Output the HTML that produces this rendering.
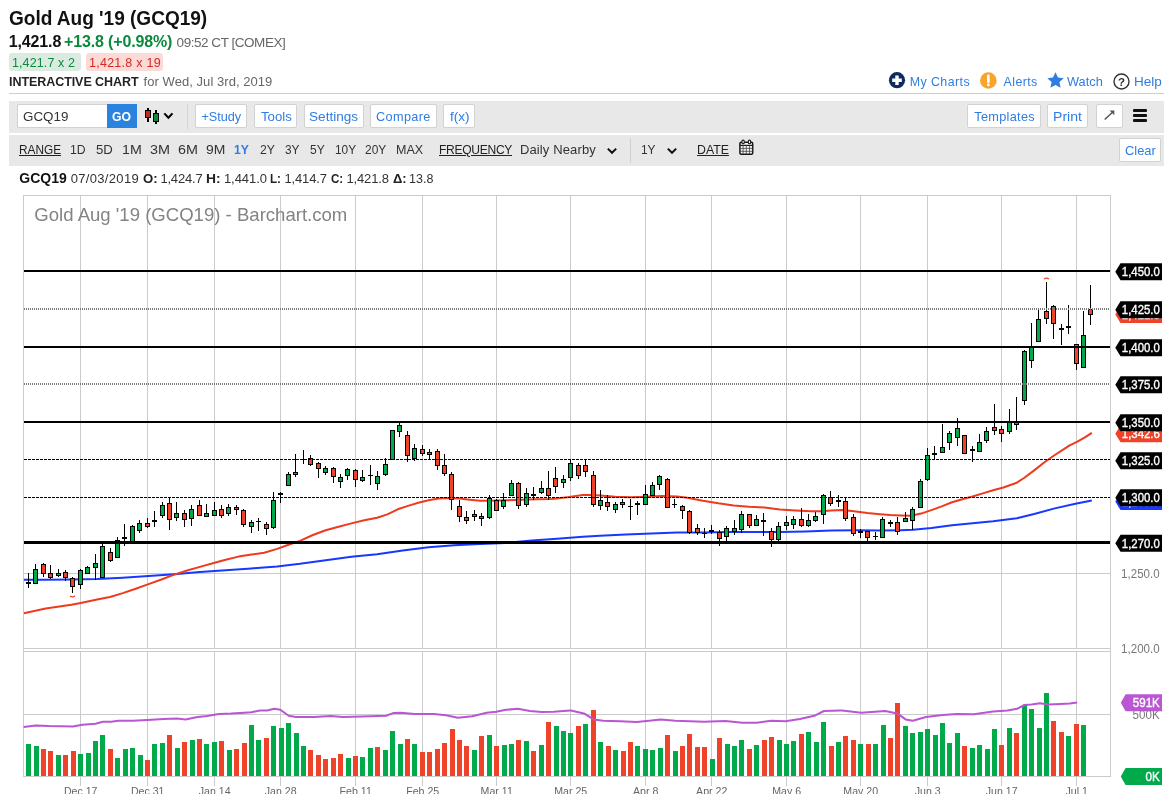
<!DOCTYPE html>
<html lang="en"><head><meta charset="utf-8"><title>Gold Aug '19 (GCQ19) Interactive Chart</title>
<style>
html,body{margin:0;padding:0;background:#fff}
body{width:1167px;height:794px;position:relative;overflow:hidden;font-family:"Liberation Sans",Arial,sans-serif}
.t{position:absolute;white-space:nowrap;line-height:1;z-index:3;transform-origin:0 0}
.bx{position:absolute;box-sizing:border-box}
.bar{background:#e8e8e8}
.btn{background:#fff;border:1px solid #d2d2d2;border-radius:2px}
.pill{border-radius:3px}
svg.ic{position:absolute;overflow:visible}
</style></head>
<body>
<div id="page" style="position:absolute;left:0;top:0;width:1167px;height:794px;will-change:transform">
<svg class="chart" width="1167" height="794" viewBox="0 0 1167 794" style="position:absolute;left:0;top:0" font-family="Liberation Sans, Arial, sans-serif">
<g shape-rendering="crispEdges" fill="none" stroke="#cbcbcb" stroke-width="1">
<rect x="23.5" y="195.5" width="1087.0" height="453.0" fill="#fff"/>
<rect x="23.5" y="651.5" width="1087.0" height="125.0" fill="#fff"/>
<path d="M80.5 195.5V648.5M80.5 651.5V785.5"/>
<path d="M147.5 195.5V648.5M147.5 651.5V785.5"/>
<path d="M214.5 195.5V648.5M214.5 651.5V785.5"/>
<path d="M280.5 195.5V648.5M280.5 651.5V785.5"/>
<path d="M355.5 195.5V648.5M355.5 651.5V785.5"/>
<path d="M422.5 195.5V648.5M422.5 651.5V785.5"/>
<path d="M496.5 195.5V648.5M496.5 651.5V785.5"/>
<path d="M570.5 195.5V648.5M570.5 651.5V785.5"/>
<path d="M645.5 195.5V648.5M645.5 651.5V785.5"/>
<path d="M711.5 195.5V648.5M711.5 651.5V785.5"/>
<path d="M786.5 195.5V648.5M786.5 651.5V785.5"/>
<path d="M860.5 195.5V648.5M860.5 651.5V785.5"/>
<path d="M927.5 195.5V648.5M927.5 651.5V785.5"/>
<path d="M1001.5 195.5V648.5M1001.5 651.5V785.5"/>
<path d="M1076.5 195.5V648.5M1076.5 651.5V785.5"/>
<path d="M23.5 573.5H1110.5"/>
<path d="M23.5 714.5H1110.5M23.5 648.5V651.5M1110.5 648.5V651.5"/>
</g>
<text id="wm" x="34.3" y="221.3" font-size="18.5" fill="#838383" textLength="313" lengthAdjust="spacingAndGlyphs">Gold Aug '19 (GCQ19) - Barchart.com</text>
<g shape-rendering="crispEdges">
<rect x="26" y="744" width="5" height="32" fill="#00aa4b"/>
<rect x="34" y="746" width="5" height="30" fill="#00aa4b"/>
<rect x="41" y="749" width="5" height="27" fill="#ee4328"/>
<rect x="48" y="751" width="5" height="25" fill="#ee4328"/>
<rect x="56" y="755" width="5" height="21" fill="#00aa4b"/>
<rect x="63" y="755" width="5" height="21" fill="#ee4328"/>
<rect x="71" y="751" width="5" height="25" fill="#ee4328"/>
<rect x="78" y="754" width="5" height="22" fill="#00aa4b"/>
<rect x="86" y="753" width="5" height="23" fill="#00aa4b"/>
<rect x="93" y="741" width="5" height="35" fill="#00aa4b"/>
<rect x="100" y="735" width="5" height="41" fill="#00aa4b"/>
<rect x="108" y="749" width="5" height="27" fill="#ee4328"/>
<rect x="115" y="758" width="5" height="18" fill="#00aa4b"/>
<rect x="123" y="749" width="5" height="27" fill="#00aa4b"/>
<rect x="130" y="748" width="5" height="28" fill="#00aa4b"/>
<rect x="138" y="755" width="5" height="21" fill="#00aa4b"/>
<rect x="145" y="760" width="5" height="16" fill="#ee4328"/>
<rect x="152" y="744" width="5" height="32" fill="#00aa4b"/>
<rect x="160" y="743" width="5" height="33" fill="#00aa4b"/>
<rect x="167" y="735" width="5" height="41" fill="#ee4328"/>
<rect x="175" y="748" width="5" height="28" fill="#00aa4b"/>
<rect x="182" y="742" width="5" height="34" fill="#ee4328"/>
<rect x="190" y="740" width="5" height="36" fill="#00aa4b"/>
<rect x="197" y="739" width="5" height="37" fill="#ee4328"/>
<rect x="204" y="744" width="5" height="32" fill="#00aa4b"/>
<rect x="212" y="742" width="5" height="34" fill="#00aa4b"/>
<rect x="219" y="741" width="5" height="35" fill="#ee4328"/>
<rect x="227" y="750" width="5" height="26" fill="#00aa4b"/>
<rect x="234" y="749" width="5" height="27" fill="#ee4328"/>
<rect x="242" y="743" width="5" height="33" fill="#ee4328"/>
<rect x="249" y="725" width="5" height="51" fill="#00aa4b"/>
<rect x="256" y="740" width="5" height="36" fill="#00aa4b"/>
<rect x="264" y="738" width="5" height="38" fill="#ee4328"/>
<rect x="271" y="726" width="5" height="50" fill="#00aa4b"/>
<rect x="279" y="728" width="5" height="48" fill="#00aa4b"/>
<rect x="286" y="723" width="5" height="53" fill="#00aa4b"/>
<rect x="294" y="733" width="5" height="43" fill="#00aa4b"/>
<rect x="301" y="746" width="5" height="30" fill="#00aa4b"/>
<rect x="308" y="750" width="5" height="26" fill="#ee4328"/>
<rect x="316" y="755" width="5" height="21" fill="#ee4328"/>
<rect x="323" y="759" width="5" height="17" fill="#ee4328"/>
<rect x="331" y="758" width="5" height="18" fill="#ee4328"/>
<rect x="338" y="754" width="5" height="22" fill="#ee4328"/>
<rect x="346" y="758" width="5" height="18" fill="#00aa4b"/>
<rect x="353" y="756" width="5" height="20" fill="#ee4328"/>
<rect x="360" y="757" width="5" height="19" fill="#00aa4b"/>
<rect x="368" y="748" width="5" height="28" fill="#00aa4b"/>
<rect x="375" y="747" width="5" height="29" fill="#ee4328"/>
<rect x="383" y="750" width="5" height="26" fill="#00aa4b"/>
<rect x="390" y="731" width="5" height="45" fill="#00aa4b"/>
<rect x="398" y="744" width="5" height="32" fill="#00aa4b"/>
<rect x="405" y="739" width="5" height="37" fill="#ee4328"/>
<rect x="412" y="744" width="5" height="32" fill="#00aa4b"/>
<rect x="420" y="752" width="5" height="24" fill="#ee4328"/>
<rect x="427" y="752" width="5" height="24" fill="#ee4328"/>
<rect x="435" y="749" width="5" height="27" fill="#ee4328"/>
<rect x="442" y="743" width="5" height="33" fill="#ee4328"/>
<rect x="450" y="729" width="5" height="47" fill="#ee4328"/>
<rect x="457" y="740" width="5" height="36" fill="#ee4328"/>
<rect x="464" y="746" width="5" height="30" fill="#ee4328"/>
<rect x="472" y="750" width="5" height="26" fill="#00aa4b"/>
<rect x="479" y="736" width="5" height="40" fill="#ee4328"/>
<rect x="487" y="735" width="5" height="41" fill="#00aa4b"/>
<rect x="494" y="746" width="5" height="30" fill="#ee4328"/>
<rect x="502" y="745" width="5" height="31" fill="#00aa4b"/>
<rect x="509" y="744" width="5" height="32" fill="#00aa4b"/>
<rect x="516" y="740" width="5" height="36" fill="#ee4328"/>
<rect x="524" y="741" width="5" height="35" fill="#00aa4b"/>
<rect x="531" y="751" width="5" height="25" fill="#ee4328"/>
<rect x="539" y="745" width="5" height="31" fill="#00aa4b"/>
<rect x="546" y="722" width="5" height="54" fill="#ee4328"/>
<rect x="554" y="726" width="5" height="50" fill="#00aa4b"/>
<rect x="561" y="731" width="5" height="45" fill="#00aa4b"/>
<rect x="568" y="733" width="5" height="43" fill="#00aa4b"/>
<rect x="576" y="726" width="5" height="50" fill="#ee4328"/>
<rect x="583" y="724" width="5" height="52" fill="#00aa4b"/>
<rect x="591" y="710" width="5" height="66" fill="#ee4328"/>
<rect x="598" y="742" width="5" height="34" fill="#00aa4b"/>
<rect x="606" y="746" width="5" height="30" fill="#ee4328"/>
<rect x="613" y="750" width="5" height="26" fill="#00aa4b"/>
<rect x="621" y="751" width="5" height="25" fill="#ee4328"/>
<rect x="628" y="742" width="5" height="34" fill="#ee4328"/>
<rect x="635" y="746" width="5" height="30" fill="#00aa4b"/>
<rect x="643" y="749" width="5" height="27" fill="#00aa4b"/>
<rect x="650" y="750" width="5" height="26" fill="#00aa4b"/>
<rect x="658" y="748" width="5" height="28" fill="#00aa4b"/>
<rect x="665" y="735" width="5" height="41" fill="#ee4328"/>
<rect x="673" y="751" width="5" height="25" fill="#00aa4b"/>
<rect x="680" y="746" width="5" height="30" fill="#ee4328"/>
<rect x="687" y="734" width="5" height="42" fill="#ee4328"/>
<rect x="695" y="747" width="5" height="29" fill="#ee4328"/>
<rect x="702" y="747" width="5" height="29" fill="#ee4328"/>
<rect x="710" y="759" width="5" height="17" fill="#00aa4b"/>
<rect x="717" y="738" width="5" height="38" fill="#ee4328"/>
<rect x="725" y="744" width="5" height="32" fill="#00aa4b"/>
<rect x="732" y="746" width="5" height="30" fill="#00aa4b"/>
<rect x="739" y="740" width="5" height="36" fill="#00aa4b"/>
<rect x="747" y="749" width="5" height="27" fill="#ee4328"/>
<rect x="754" y="745" width="5" height="31" fill="#00aa4b"/>
<rect x="762" y="740" width="5" height="36" fill="#ee4328"/>
<rect x="769" y="737" width="5" height="39" fill="#ee4328"/>
<rect x="777" y="740" width="5" height="36" fill="#00aa4b"/>
<rect x="784" y="744" width="5" height="32" fill="#00aa4b"/>
<rect x="791" y="741" width="5" height="35" fill="#00aa4b"/>
<rect x="799" y="734" width="5" height="42" fill="#ee4328"/>
<rect x="806" y="732" width="5" height="44" fill="#00aa4b"/>
<rect x="814" y="742" width="5" height="34" fill="#00aa4b"/>
<rect x="821" y="722" width="5" height="54" fill="#00aa4b"/>
<rect x="829" y="746" width="5" height="30" fill="#ee4328"/>
<rect x="836" y="742" width="5" height="34" fill="#00aa4b"/>
<rect x="843" y="736" width="5" height="40" fill="#ee4328"/>
<rect x="851" y="740" width="5" height="36" fill="#ee4328"/>
<rect x="858" y="744" width="5" height="32" fill="#00aa4b"/>
<rect x="866" y="744" width="5" height="32" fill="#ee4328"/>
<rect x="873" y="744" width="5" height="32" fill="#00aa4b"/>
<rect x="881" y="725" width="5" height="51" fill="#00aa4b"/>
<rect x="888" y="738" width="5" height="38" fill="#ee4328"/>
<rect x="895" y="703" width="5" height="73" fill="#ee4328"/>
<rect x="903" y="726" width="5" height="50" fill="#00aa4b"/>
<rect x="910" y="733" width="5" height="43" fill="#00aa4b"/>
<rect x="918" y="732" width="5" height="44" fill="#00aa4b"/>
<rect x="925" y="729" width="5" height="47" fill="#00aa4b"/>
<rect x="933" y="735" width="5" height="41" fill="#00aa4b"/>
<rect x="940" y="723" width="5" height="53" fill="#00aa4b"/>
<rect x="947" y="743" width="5" height="33" fill="#00aa4b"/>
<rect x="955" y="733" width="5" height="43" fill="#00aa4b"/>
<rect x="962" y="746" width="5" height="30" fill="#ee4328"/>
<rect x="970" y="748" width="5" height="28" fill="#00aa4b"/>
<rect x="977" y="745" width="5" height="31" fill="#00aa4b"/>
<rect x="985" y="749" width="5" height="27" fill="#00aa4b"/>
<rect x="992" y="729" width="5" height="47" fill="#00aa4b"/>
<rect x="999" y="745" width="5" height="31" fill="#ee4328"/>
<rect x="1007" y="728" width="5" height="48" fill="#00aa4b"/>
<rect x="1014" y="733" width="5" height="43" fill="#ee4328"/>
<rect x="1022" y="705" width="5" height="71" fill="#00aa4b"/>
<rect x="1029" y="709" width="5" height="67" fill="#00aa4b"/>
<rect x="1037" y="728" width="5" height="48" fill="#00aa4b"/>
<rect x="1044" y="693" width="5" height="83" fill="#00aa4b"/>
<rect x="1051" y="721" width="5" height="55" fill="#ee4328"/>
<rect x="1059" y="732" width="5" height="44" fill="#ee4328"/>
<rect x="1066" y="736" width="5" height="40" fill="#00aa4b"/>
<rect x="1074" y="724" width="5" height="52" fill="#ee4328"/>
<rect x="1081" y="725" width="5" height="51" fill="#00aa4b"/>
</g>
<path d="M23.6 727.1 L35.6 725.4 L48.8 726.1 L72.8 726.6 L82.4 724.7 L95.6 723.7 L102.8 721.8 L111.2 721.8 L118.4 720.8 L132.8 720.8 L147.4 719.9 L164.0 719.1 L177.1 718.4 L185.5 719.4 L197.5 717.0 L207.1 716.0 L219.1 714.1 L231.1 713.6 L244.3 712.7 L251.5 712.2 L259.9 710.5 L267.1 710.5 L274.3 708.8 L280.3 709.8 L288.7 715.8 L295.9 717.0 L297.2 717.0 L314.0 717.0 L330.8 716.0 L342.8 717.0 L362.0 716.5 L386.0 715.8 L393.2 713.1 L400.4 712.7 L414.8 713.9 L434.0 713.9 L446.0 715.3 L457.9 717.7 L472.3 716.3 L486.7 712.7 L496.3 711.7 L505.9 709.8 L517.9 708.8 L529.9 711.0 L541.9 711.9 L553.9 711.7 L570.0 710.5 L570.8 710.5 L584.0 713.4 L593.6 719.4 L603.2 720.8 L620.0 721.3 L636.8 722.0 L651.2 720.6 L660.8 719.4 L675.2 720.8 L689.6 721.3 L704.0 721.8 L725.5 721.1 L742.3 722.7 L756.7 722.7 L771.1 720.8 L785.5 721.3 L799.9 718.9 L814.3 715.8 L823.9 711.0 L840.0 710.5 L842.0 710.5 L861.2 712.7 L885.2 711.0 L897.2 713.4 L905.6 719.4 L912.8 720.8 L926.0 717.0 L942.8 715.1 L957.2 713.9 L974.0 714.3 L993.1 711.5 L1007.5 710.5 L1017.1 708.8 L1024.3 705.0 L1031.5 704.5 L1039.9 703.3 L1048.3 704.5 L1060.3 704.0 L1069.9 703.5 L1077.1 702.6" fill="none" stroke="#ba55d3" stroke-width="2" stroke-linejoin="round"/>
<path d="M23.9 579.7 L45.7 579.7 L71.4 579.5 L97.1 579.0 L122.8 577.7 L148.5 576.1 L174.2 574.3 L199.9 572.0 L225.7 570.2 L251.4 568.4 L277.1 566.4 L300.0 563.8 L325.7 560.2 L351.4 556.8 L377.1 554.2 L402.8 550.4 L428.5 547.3 L454.2 545.2 L479.9 544.0 L505.7 542.9 L531.4 540.6 L557.1 538.8 L582.8 536.8 L600.0 535.7 L625.7 534.4 L651.4 533.4 L677.1 532.6 L702.8 532.4 L728.5 532.1 L754.2 532.1 L779.9 531.9 L805.7 531.4 L831.4 530.6 L857.1 530.3 L880.0 530.5 L900.6 530.2 L912.9 529.8 L931.4 528.0 L952.0 525.3 L972.5 523.2 L993.1 521.2 L1016.8 518.3 L1034.2 514.0 L1054.8 508.4 L1075.4 503.7 L1091.8 500.4" fill="none" stroke="#1838ff" stroke-width="2" stroke-linejoin="round"/>
<path d="M23.9 613.2 L45.7 608.5 L71.4 604.7 L80.7 602.9 L97.1 599.5 L110.0 597.0 L122.8 593.1 L135.7 588.7 L148.5 584.1 L161.4 579.5 L174.2 574.6 L187.1 570.5 L199.9 566.9 L214.6 562.8 L225.7 559.7 L238.5 556.6 L251.4 554.6 L264.2 552.8 L277.1 548.9 L289.9 544.3 L300.0 540.9 L312.9 535.0 L325.7 530.3 L338.6 526.7 L351.4 523.4 L364.3 520.3 L377.1 517.7 L387.4 514.4 L397.7 509.3 L408.0 505.9 L418.3 502.8 L428.5 500.3 L438.8 498.5 L449.1 497.9 L459.4 498.5 L469.7 499.7 L479.9 500.8 L490.2 500.8 L505.7 500.3 L521.1 499.7 L536.5 499.2 L551.9 499.0 L567.4 497.2 L582.8 495.1 L593.1 495.1 L600.0 495.6 L615.4 496.7 L630.8 497.2 L646.3 496.7 L661.7 495.9 L677.1 496.4 L687.4 497.7 L702.8 500.8 L718.3 503.3 L733.7 505.4 L749.1 506.7 L764.5 507.5 L779.9 509.5 L795.4 510.5 L810.8 511.3 L821.1 511.3 L831.4 510.5 L841.6 510.0 L851.9 511.1 L867.4 513.1 L880.0 514.2 L890.3 515.0 L900.6 515.4 L910.8 515.8 L921.1 513.6 L931.4 510.1 L941.7 506.4 L952.0 502.3 L962.3 499.2 L972.5 496.5 L982.8 493.4 L993.1 490.3 L1003.4 487.5 L1016.8 482.7 L1024.0 478.0 L1034.2 470.4 L1044.5 462.2 L1054.8 455.0 L1065.1 448.4 L1069.2 445.7 L1077.4 441.6 L1085.7 436.9 L1091.8 432.8" fill="none" stroke="#ee3a1e" stroke-width="2" stroke-linejoin="round"/>
<g shape-rendering="crispEdges">
<rect x="28" y="573" width="1" height="15" fill="#000"/>
<rect x="26" y="582" width="5" height="2" fill="#000"/>
<rect x="35" y="564" width="1" height="20" fill="#000"/>
<rect x="33" y="569" width="5" height="15" fill="#000"/>
<rect x="34" y="570" width="3" height="13" fill="#00aa4b"/>
<rect x="43" y="563" width="1" height="14" fill="#000"/>
<rect x="41" y="564" width="5" height="10" fill="#000"/>
<rect x="42" y="565" width="3" height="8" fill="#ee4328"/>
<rect x="50" y="565" width="1" height="14" fill="#000"/>
<rect x="48" y="573" width="5" height="5" fill="#000"/>
<rect x="49" y="574" width="3" height="3" fill="#ee4328"/>
<rect x="58" y="569" width="1" height="8" fill="#000"/>
<rect x="56" y="573" width="5" height="3" fill="#000"/>
<rect x="57" y="574" width="3" height="1" fill="#00aa4b"/>
<rect x="65" y="570" width="1" height="11" fill="#000"/>
<rect x="63" y="572" width="5" height="6" fill="#000"/>
<rect x="64" y="573" width="3" height="4" fill="#ee4328"/>
<rect x="72" y="577" width="1" height="16" fill="#000"/>
<rect x="70" y="578" width="5" height="9" fill="#000"/>
<rect x="71" y="579" width="3" height="7" fill="#ee4328"/>
<rect x="80" y="569" width="1" height="20" fill="#000"/>
<rect x="78" y="570" width="5" height="15" fill="#000"/>
<rect x="79" y="571" width="3" height="13" fill="#00aa4b"/>
<rect x="87" y="566" width="1" height="8" fill="#000"/>
<rect x="85" y="567" width="5" height="7" fill="#000"/>
<rect x="86" y="568" width="3" height="5" fill="#00aa4b"/>
<rect x="95" y="554" width="1" height="26" fill="#000"/>
<rect x="93" y="563" width="5" height="5" fill="#000"/>
<rect x="94" y="564" width="3" height="3" fill="#00aa4b"/>
<rect x="102" y="544" width="1" height="34" fill="#000"/>
<rect x="100" y="546" width="5" height="32" fill="#000"/>
<rect x="101" y="547" width="3" height="30" fill="#00aa4b"/>
<rect x="110" y="548" width="1" height="14" fill="#000"/>
<rect x="108" y="552" width="5" height="9" fill="#000"/>
<rect x="109" y="553" width="3" height="7" fill="#ee4328"/>
<rect x="117" y="537" width="1" height="21" fill="#000"/>
<rect x="115" y="540" width="5" height="18" fill="#000"/>
<rect x="116" y="541" width="3" height="16" fill="#00aa4b"/>
<rect x="124" y="524" width="1" height="22" fill="#000"/>
<rect x="122" y="537" width="5" height="2" fill="#000"/>
<rect x="132" y="525" width="1" height="17" fill="#000"/>
<rect x="130" y="526" width="5" height="16" fill="#000"/>
<rect x="131" y="527" width="3" height="14" fill="#00aa4b"/>
<rect x="139" y="520" width="1" height="13" fill="#000"/>
<rect x="137" y="523" width="5" height="8" fill="#000"/>
<rect x="138" y="524" width="3" height="6" fill="#00aa4b"/>
<rect x="147" y="518" width="1" height="10" fill="#000"/>
<rect x="145" y="523" width="5" height="4" fill="#000"/>
<rect x="146" y="524" width="3" height="2" fill="#ee4328"/>
<rect x="154" y="511" width="1" height="16" fill="#000"/>
<rect x="152" y="520" width="5" height="2" fill="#000"/>
<rect x="162" y="502" width="1" height="16" fill="#000"/>
<rect x="160" y="505" width="5" height="11" fill="#000"/>
<rect x="161" y="506" width="3" height="9" fill="#00aa4b"/>
<rect x="169" y="497" width="1" height="33" fill="#000"/>
<rect x="167" y="503" width="5" height="17" fill="#000"/>
<rect x="168" y="504" width="3" height="15" fill="#ee4328"/>
<rect x="176" y="502" width="1" height="19" fill="#000"/>
<rect x="174" y="513" width="5" height="5" fill="#000"/>
<rect x="175" y="514" width="3" height="3" fill="#00aa4b"/>
<rect x="184" y="510" width="1" height="17" fill="#000"/>
<rect x="182" y="513" width="5" height="7" fill="#000"/>
<rect x="183" y="514" width="3" height="5" fill="#ee4328"/>
<rect x="191" y="505" width="1" height="21" fill="#000"/>
<rect x="189" y="509" width="5" height="10" fill="#000"/>
<rect x="190" y="510" width="3" height="8" fill="#00aa4b"/>
<rect x="199" y="500" width="1" height="16" fill="#000"/>
<rect x="197" y="505" width="5" height="11" fill="#000"/>
<rect x="198" y="506" width="3" height="9" fill="#ee4328"/>
<rect x="206" y="504" width="1" height="13" fill="#000"/>
<rect x="204" y="513" width="5" height="4" fill="#000"/>
<rect x="205" y="514" width="3" height="2" fill="#00aa4b"/>
<rect x="214" y="502" width="1" height="14" fill="#000"/>
<rect x="212" y="510" width="5" height="6" fill="#000"/>
<rect x="213" y="511" width="3" height="4" fill="#00aa4b"/>
<rect x="221" y="505" width="1" height="13" fill="#000"/>
<rect x="219" y="509" width="5" height="7" fill="#000"/>
<rect x="220" y="510" width="3" height="5" fill="#ee4328"/>
<rect x="228" y="504" width="1" height="12" fill="#000"/>
<rect x="226" y="507" width="5" height="7" fill="#000"/>
<rect x="227" y="508" width="3" height="5" fill="#00aa4b"/>
<rect x="236" y="505" width="1" height="10" fill="#000"/>
<rect x="234" y="507" width="5" height="3" fill="#000"/>
<rect x="235" y="508" width="3" height="1" fill="#ee4328"/>
<rect x="243" y="509" width="1" height="18" fill="#000"/>
<rect x="241" y="510" width="5" height="15" fill="#000"/>
<rect x="242" y="511" width="3" height="13" fill="#ee4328"/>
<rect x="251" y="520" width="1" height="13" fill="#000"/>
<rect x="249" y="522" width="5" height="5" fill="#000"/>
<rect x="250" y="523" width="3" height="3" fill="#00aa4b"/>
<rect x="258" y="518" width="1" height="13" fill="#000"/>
<rect x="256" y="521" width="5" height="1" fill="#000"/>
<rect x="266" y="522" width="1" height="13" fill="#000"/>
<rect x="264" y="524" width="5" height="5" fill="#000"/>
<rect x="265" y="525" width="3" height="3" fill="#ee4328"/>
<rect x="273" y="492" width="1" height="37" fill="#000"/>
<rect x="271" y="500" width="5" height="28" fill="#000"/>
<rect x="272" y="501" width="3" height="26" fill="#00aa4b"/>
<rect x="280" y="492" width="1" height="11" fill="#000"/>
<rect x="278" y="493" width="5" height="2" fill="#000"/>
<rect x="288" y="472" width="1" height="14" fill="#000"/>
<rect x="286" y="474" width="5" height="12" fill="#000"/>
<rect x="287" y="475" width="3" height="10" fill="#00aa4b"/>
<rect x="295" y="454" width="1" height="23" fill="#000"/>
<rect x="293" y="472" width="5" height="3" fill="#000"/>
<rect x="294" y="473" width="3" height="1" fill="#ee4328"/>
<rect x="303" y="450" width="1" height="14" fill="#000"/>
<rect x="301" y="459" width="5" height="1" fill="#000"/>
<rect x="310" y="455" width="1" height="11" fill="#000"/>
<rect x="308" y="458" width="5" height="7" fill="#000"/>
<rect x="309" y="459" width="3" height="5" fill="#ee4328"/>
<rect x="318" y="462" width="1" height="16" fill="#000"/>
<rect x="316" y="463" width="5" height="6" fill="#000"/>
<rect x="317" y="464" width="3" height="4" fill="#ee4328"/>
<rect x="325" y="466" width="1" height="9" fill="#000"/>
<rect x="323" y="468" width="5" height="5" fill="#000"/>
<rect x="324" y="469" width="3" height="3" fill="#00aa4b"/>
<rect x="333" y="467" width="1" height="16" fill="#000"/>
<rect x="331" y="468" width="5" height="9" fill="#000"/>
<rect x="332" y="469" width="3" height="7" fill="#ee4328"/>
<rect x="340" y="474" width="1" height="14" fill="#000"/>
<rect x="338" y="477" width="5" height="5" fill="#000"/>
<rect x="339" y="478" width="3" height="3" fill="#00aa4b"/>
<rect x="347" y="468" width="1" height="12" fill="#000"/>
<rect x="345" y="469" width="5" height="7" fill="#000"/>
<rect x="346" y="470" width="3" height="5" fill="#00aa4b"/>
<rect x="355" y="469" width="1" height="18" fill="#000"/>
<rect x="353" y="470" width="5" height="10" fill="#000"/>
<rect x="354" y="471" width="3" height="8" fill="#ee4328"/>
<rect x="362" y="470" width="1" height="12" fill="#000"/>
<rect x="360" y="477" width="5" height="4" fill="#000"/>
<rect x="361" y="478" width="3" height="2" fill="#00aa4b"/>
<rect x="370" y="465" width="1" height="20" fill="#000"/>
<rect x="368" y="475" width="5" height="1" fill="#000"/>
<rect x="377" y="471" width="1" height="19" fill="#000"/>
<rect x="375" y="476" width="5" height="8" fill="#000"/>
<rect x="376" y="477" width="3" height="6" fill="#00aa4b"/>
<rect x="385" y="458" width="1" height="18" fill="#000"/>
<rect x="383" y="464" width="5" height="11" fill="#000"/>
<rect x="384" y="465" width="3" height="9" fill="#00aa4b"/>
<rect x="392" y="430" width="1" height="30" fill="#000"/>
<rect x="390" y="430" width="5" height="30" fill="#000"/>
<rect x="391" y="431" width="3" height="28" fill="#00aa4b"/>
<rect x="399" y="423" width="1" height="14" fill="#000"/>
<rect x="397" y="425" width="5" height="7" fill="#000"/>
<rect x="398" y="426" width="3" height="5" fill="#00aa4b"/>
<rect x="407" y="431" width="1" height="31" fill="#000"/>
<rect x="405" y="435" width="5" height="21" fill="#000"/>
<rect x="406" y="436" width="3" height="19" fill="#ee4328"/>
<rect x="414" y="444" width="1" height="17" fill="#000"/>
<rect x="412" y="448" width="5" height="11" fill="#000"/>
<rect x="413" y="449" width="3" height="9" fill="#00aa4b"/>
<rect x="422" y="445" width="1" height="11" fill="#000"/>
<rect x="420" y="449" width="5" height="5" fill="#000"/>
<rect x="421" y="450" width="3" height="3" fill="#ee4328"/>
<rect x="429" y="449" width="1" height="10" fill="#000"/>
<rect x="427" y="452" width="5" height="3" fill="#000"/>
<rect x="428" y="453" width="3" height="1" fill="#ee4328"/>
<rect x="437" y="449" width="1" height="21" fill="#000"/>
<rect x="435" y="451" width="5" height="15" fill="#000"/>
<rect x="436" y="452" width="3" height="13" fill="#ee4328"/>
<rect x="444" y="454" width="1" height="22" fill="#000"/>
<rect x="442" y="465" width="5" height="9" fill="#000"/>
<rect x="443" y="466" width="3" height="7" fill="#ee4328"/>
<rect x="451" y="472" width="1" height="38" fill="#000"/>
<rect x="449" y="474" width="5" height="26" fill="#000"/>
<rect x="450" y="475" width="3" height="24" fill="#ee4328"/>
<rect x="459" y="500" width="1" height="22" fill="#000"/>
<rect x="457" y="506" width="5" height="11" fill="#000"/>
<rect x="458" y="507" width="3" height="9" fill="#ee4328"/>
<rect x="466" y="511" width="1" height="13" fill="#000"/>
<rect x="464" y="517" width="5" height="4" fill="#000"/>
<rect x="465" y="518" width="3" height="2" fill="#ee4328"/>
<rect x="474" y="510" width="1" height="11" fill="#000"/>
<rect x="472" y="514" width="5" height="3" fill="#000"/>
<rect x="473" y="515" width="3" height="1" fill="#ee4328"/>
<rect x="481" y="513" width="1" height="13" fill="#000"/>
<rect x="479" y="516" width="5" height="3" fill="#000"/>
<rect x="480" y="517" width="3" height="1" fill="#ee4328"/>
<rect x="489" y="495" width="1" height="24" fill="#000"/>
<rect x="487" y="498" width="5" height="20" fill="#000"/>
<rect x="488" y="499" width="3" height="18" fill="#00aa4b"/>
<rect x="496" y="499" width="1" height="12" fill="#000"/>
<rect x="494" y="500" width="5" height="11" fill="#000"/>
<rect x="495" y="501" width="3" height="9" fill="#ee4328"/>
<rect x="503" y="493" width="1" height="16" fill="#000"/>
<rect x="501" y="500" width="5" height="7" fill="#000"/>
<rect x="502" y="501" width="3" height="5" fill="#00aa4b"/>
<rect x="511" y="480" width="1" height="16" fill="#000"/>
<rect x="509" y="483" width="5" height="13" fill="#000"/>
<rect x="510" y="484" width="3" height="11" fill="#00aa4b"/>
<rect x="518" y="482" width="1" height="27" fill="#000"/>
<rect x="516" y="483" width="5" height="23" fill="#000"/>
<rect x="517" y="484" width="3" height="21" fill="#ee4328"/>
<rect x="526" y="488" width="1" height="19" fill="#000"/>
<rect x="524" y="493" width="5" height="12" fill="#000"/>
<rect x="525" y="494" width="3" height="10" fill="#00aa4b"/>
<rect x="533" y="487" width="1" height="13" fill="#000"/>
<rect x="531" y="494" width="5" height="2" fill="#000"/>
<rect x="541" y="481" width="1" height="13" fill="#000"/>
<rect x="539" y="488" width="5" height="5" fill="#000"/>
<rect x="540" y="489" width="3" height="3" fill="#00aa4b"/>
<rect x="548" y="471" width="1" height="29" fill="#000"/>
<rect x="546" y="488" width="5" height="8" fill="#000"/>
<rect x="547" y="489" width="3" height="6" fill="#ee4328"/>
<rect x="555" y="467" width="1" height="26" fill="#000"/>
<rect x="553" y="478" width="5" height="9" fill="#000"/>
<rect x="554" y="479" width="3" height="7" fill="#ee4328"/>
<rect x="563" y="475" width="1" height="13" fill="#000"/>
<rect x="561" y="479" width="5" height="4" fill="#000"/>
<rect x="562" y="480" width="3" height="2" fill="#00aa4b"/>
<rect x="570" y="460" width="1" height="21" fill="#000"/>
<rect x="568" y="463" width="5" height="15" fill="#000"/>
<rect x="569" y="464" width="3" height="13" fill="#00aa4b"/>
<rect x="578" y="463" width="1" height="16" fill="#000"/>
<rect x="576" y="465" width="5" height="11" fill="#000"/>
<rect x="577" y="466" width="3" height="9" fill="#ee4328"/>
<rect x="585" y="459" width="1" height="18" fill="#000"/>
<rect x="583" y="465" width="5" height="7" fill="#000"/>
<rect x="584" y="466" width="3" height="5" fill="#ee4328"/>
<rect x="593" y="471" width="1" height="36" fill="#000"/>
<rect x="591" y="475" width="5" height="30" fill="#000"/>
<rect x="592" y="476" width="3" height="28" fill="#ee4328"/>
<rect x="600" y="490" width="1" height="20" fill="#000"/>
<rect x="598" y="500" width="5" height="6" fill="#000"/>
<rect x="599" y="501" width="3" height="4" fill="#00aa4b"/>
<rect x="607" y="495" width="1" height="16" fill="#000"/>
<rect x="605" y="502" width="5" height="5" fill="#000"/>
<rect x="606" y="503" width="3" height="3" fill="#ee4328"/>
<rect x="615" y="502" width="1" height="11" fill="#000"/>
<rect x="613" y="504" width="5" height="6" fill="#000"/>
<rect x="614" y="505" width="3" height="4" fill="#00aa4b"/>
<rect x="622" y="499" width="1" height="9" fill="#000"/>
<rect x="620" y="502" width="5" height="3" fill="#000"/>
<rect x="621" y="503" width="3" height="1" fill="#ee4328"/>
<rect x="630" y="499" width="1" height="21" fill="#000"/>
<rect x="628" y="506" width="5" height="1" fill="#000"/>
<rect x="637" y="501" width="1" height="14" fill="#000"/>
<rect x="635" y="503" width="5" height="2" fill="#000"/>
<rect x="645" y="485" width="1" height="20" fill="#000"/>
<rect x="643" y="494" width="5" height="11" fill="#000"/>
<rect x="644" y="495" width="3" height="9" fill="#00aa4b"/>
<rect x="652" y="482" width="1" height="14" fill="#000"/>
<rect x="650" y="485" width="5" height="11" fill="#000"/>
<rect x="651" y="486" width="3" height="9" fill="#00aa4b"/>
<rect x="659" y="475" width="1" height="15" fill="#000"/>
<rect x="657" y="476" width="5" height="9" fill="#000"/>
<rect x="658" y="477" width="3" height="7" fill="#00aa4b"/>
<rect x="667" y="478" width="1" height="30" fill="#000"/>
<rect x="665" y="479" width="5" height="29" fill="#000"/>
<rect x="666" y="480" width="3" height="27" fill="#ee4328"/>
<rect x="674" y="499" width="1" height="9" fill="#000"/>
<rect x="672" y="504" width="5" height="1" fill="#000"/>
<rect x="682" y="505" width="1" height="14" fill="#000"/>
<rect x="680" y="506" width="5" height="5" fill="#000"/>
<rect x="681" y="507" width="3" height="3" fill="#ee4328"/>
<rect x="689" y="510" width="1" height="24" fill="#000"/>
<rect x="687" y="511" width="5" height="22" fill="#000"/>
<rect x="688" y="512" width="3" height="20" fill="#ee4328"/>
<rect x="697" y="524" width="1" height="11" fill="#000"/>
<rect x="695" y="528" width="5" height="5" fill="#000"/>
<rect x="696" y="529" width="3" height="3" fill="#ee4328"/>
<rect x="704" y="528" width="1" height="10" fill="#000"/>
<rect x="702" y="533" width="5" height="1" fill="#000"/>
<rect x="711" y="525" width="1" height="9" fill="#000"/>
<rect x="709" y="530" width="5" height="2" fill="#000"/>
<rect x="719" y="530" width="1" height="16" fill="#000"/>
<rect x="717" y="532" width="5" height="7" fill="#000"/>
<rect x="718" y="533" width="3" height="5" fill="#ee4328"/>
<rect x="726" y="526" width="1" height="15" fill="#000"/>
<rect x="724" y="528" width="5" height="9" fill="#000"/>
<rect x="725" y="529" width="3" height="7" fill="#00aa4b"/>
<rect x="734" y="520" width="1" height="15" fill="#000"/>
<rect x="732" y="528" width="5" height="4" fill="#000"/>
<rect x="733" y="529" width="3" height="2" fill="#00aa4b"/>
<rect x="741" y="511" width="1" height="22" fill="#000"/>
<rect x="739" y="514" width="5" height="16" fill="#000"/>
<rect x="740" y="515" width="3" height="14" fill="#00aa4b"/>
<rect x="749" y="514" width="1" height="14" fill="#000"/>
<rect x="747" y="514" width="5" height="12" fill="#000"/>
<rect x="748" y="515" width="3" height="10" fill="#ee4328"/>
<rect x="756" y="515" width="1" height="11" fill="#000"/>
<rect x="754" y="519" width="5" height="7" fill="#000"/>
<rect x="755" y="520" width="3" height="5" fill="#00aa4b"/>
<rect x="763" y="513" width="1" height="23" fill="#000"/>
<rect x="761" y="520" width="5" height="2" fill="#000"/>
<rect x="771" y="528" width="1" height="19" fill="#000"/>
<rect x="769" y="531" width="5" height="9" fill="#000"/>
<rect x="770" y="532" width="3" height="7" fill="#ee4328"/>
<rect x="778" y="522" width="1" height="20" fill="#000"/>
<rect x="776" y="526" width="5" height="14" fill="#000"/>
<rect x="777" y="527" width="3" height="12" fill="#00aa4b"/>
<rect x="786" y="516" width="1" height="14" fill="#000"/>
<rect x="784" y="522" width="5" height="4" fill="#000"/>
<rect x="785" y="523" width="3" height="2" fill="#00aa4b"/>
<rect x="793" y="516" width="1" height="13" fill="#000"/>
<rect x="791" y="519" width="5" height="6" fill="#000"/>
<rect x="792" y="520" width="3" height="4" fill="#00aa4b"/>
<rect x="801" y="508" width="1" height="19" fill="#000"/>
<rect x="799" y="519" width="5" height="7" fill="#000"/>
<rect x="800" y="520" width="3" height="5" fill="#ee4328"/>
<rect x="808" y="514" width="1" height="13" fill="#000"/>
<rect x="806" y="520" width="5" height="6" fill="#000"/>
<rect x="807" y="521" width="3" height="4" fill="#00aa4b"/>
<rect x="815" y="512" width="1" height="10" fill="#000"/>
<rect x="813" y="516" width="5" height="5" fill="#000"/>
<rect x="814" y="517" width="3" height="3" fill="#00aa4b"/>
<rect x="823" y="494" width="1" height="30" fill="#000"/>
<rect x="821" y="495" width="5" height="20" fill="#000"/>
<rect x="822" y="496" width="3" height="18" fill="#00aa4b"/>
<rect x="830" y="491" width="1" height="15" fill="#000"/>
<rect x="828" y="497" width="5" height="7" fill="#000"/>
<rect x="829" y="498" width="3" height="5" fill="#ee4328"/>
<rect x="838" y="495" width="1" height="12" fill="#000"/>
<rect x="836" y="500" width="5" height="2" fill="#000"/>
<rect x="845" y="498" width="1" height="23" fill="#000"/>
<rect x="843" y="501" width="5" height="18" fill="#000"/>
<rect x="844" y="502" width="3" height="16" fill="#ee4328"/>
<rect x="853" y="514" width="1" height="22" fill="#000"/>
<rect x="851" y="517" width="5" height="17" fill="#000"/>
<rect x="852" y="518" width="3" height="15" fill="#ee4328"/>
<rect x="860" y="529" width="1" height="9" fill="#000"/>
<rect x="858" y="531" width="5" height="2" fill="#000"/>
<rect x="867" y="531" width="1" height="11" fill="#000"/>
<rect x="865" y="531" width="5" height="7" fill="#000"/>
<rect x="866" y="532" width="3" height="5" fill="#ee4328"/>
<rect x="875" y="532" width="1" height="8" fill="#000"/>
<rect x="873" y="536" width="5" height="1" fill="#000"/>
<rect x="882" y="517" width="1" height="21" fill="#000"/>
<rect x="880" y="519" width="5" height="19" fill="#000"/>
<rect x="881" y="520" width="3" height="17" fill="#00aa4b"/>
<rect x="890" y="520" width="1" height="7" fill="#000"/>
<rect x="888" y="522" width="5" height="2" fill="#000"/>
<rect x="897" y="517" width="1" height="18" fill="#000"/>
<rect x="895" y="522" width="5" height="10" fill="#000"/>
<rect x="896" y="523" width="3" height="8" fill="#ee4328"/>
<rect x="905" y="512" width="1" height="10" fill="#000"/>
<rect x="903" y="518" width="5" height="4" fill="#000"/>
<rect x="904" y="519" width="3" height="2" fill="#00aa4b"/>
<rect x="912" y="507" width="1" height="23" fill="#000"/>
<rect x="910" y="509" width="5" height="12" fill="#000"/>
<rect x="911" y="510" width="3" height="10" fill="#00aa4b"/>
<rect x="920" y="479" width="1" height="29" fill="#000"/>
<rect x="918" y="481" width="5" height="27" fill="#000"/>
<rect x="919" y="482" width="3" height="25" fill="#00aa4b"/>
<rect x="927" y="448" width="1" height="33" fill="#000"/>
<rect x="925" y="455" width="5" height="25" fill="#000"/>
<rect x="926" y="456" width="3" height="23" fill="#00aa4b"/>
<rect x="934" y="446" width="1" height="14" fill="#000"/>
<rect x="932" y="453" width="5" height="2" fill="#000"/>
<rect x="942" y="424" width="1" height="29" fill="#000"/>
<rect x="940" y="447" width="5" height="6" fill="#000"/>
<rect x="941" y="448" width="3" height="4" fill="#00aa4b"/>
<rect x="949" y="431" width="1" height="19" fill="#000"/>
<rect x="947" y="433" width="5" height="10" fill="#000"/>
<rect x="948" y="434" width="3" height="8" fill="#00aa4b"/>
<rect x="957" y="418" width="1" height="28" fill="#000"/>
<rect x="955" y="428" width="5" height="10" fill="#000"/>
<rect x="956" y="429" width="3" height="8" fill="#00aa4b"/>
<rect x="964" y="435" width="1" height="19" fill="#000"/>
<rect x="962" y="435" width="5" height="19" fill="#000"/>
<rect x="963" y="436" width="3" height="17" fill="#ee4328"/>
<rect x="972" y="446" width="1" height="16" fill="#000"/>
<rect x="970" y="449" width="5" height="2" fill="#000"/>
<rect x="979" y="434" width="1" height="18" fill="#000"/>
<rect x="977" y="442" width="5" height="10" fill="#000"/>
<rect x="978" y="443" width="3" height="8" fill="#00aa4b"/>
<rect x="986" y="427" width="1" height="16" fill="#000"/>
<rect x="984" y="431" width="5" height="10" fill="#000"/>
<rect x="985" y="432" width="3" height="8" fill="#00aa4b"/>
<rect x="994" y="404" width="1" height="31" fill="#000"/>
<rect x="992" y="427" width="5" height="4" fill="#000"/>
<rect x="993" y="428" width="3" height="2" fill="#ee4328"/>
<rect x="1001" y="426" width="1" height="16" fill="#000"/>
<rect x="999" y="429" width="5" height="5" fill="#000"/>
<rect x="1000" y="430" width="3" height="3" fill="#ee4328"/>
<rect x="1009" y="409" width="1" height="25" fill="#000"/>
<rect x="1007" y="422" width="5" height="10" fill="#000"/>
<rect x="1008" y="423" width="3" height="8" fill="#00aa4b"/>
<rect x="1016" y="397" width="1" height="33" fill="#000"/>
<rect x="1014" y="422" width="5" height="3" fill="#000"/>
<rect x="1015" y="423" width="3" height="1" fill="#ee4328"/>
<rect x="1024" y="350" width="1" height="55" fill="#000"/>
<rect x="1022" y="351" width="5" height="50" fill="#000"/>
<rect x="1023" y="352" width="3" height="48" fill="#00aa4b"/>
<rect x="1031" y="323" width="1" height="45" fill="#000"/>
<rect x="1029" y="347" width="5" height="14" fill="#000"/>
<rect x="1030" y="348" width="3" height="12" fill="#00aa4b"/>
<rect x="1038" y="309" width="1" height="33" fill="#000"/>
<rect x="1036" y="319" width="5" height="23" fill="#000"/>
<rect x="1037" y="320" width="3" height="21" fill="#00aa4b"/>
<rect x="1046" y="282" width="1" height="42" fill="#000"/>
<rect x="1044" y="311" width="5" height="8" fill="#000"/>
<rect x="1045" y="312" width="3" height="6" fill="#ee4328"/>
<rect x="1053" y="305" width="1" height="34" fill="#000"/>
<rect x="1051" y="306" width="5" height="18" fill="#000"/>
<rect x="1052" y="307" width="3" height="16" fill="#ee4328"/>
<rect x="1061" y="324" width="1" height="21" fill="#000"/>
<rect x="1059" y="328" width="5" height="2" fill="#000"/>
<rect x="1068" y="305" width="1" height="29" fill="#000"/>
<rect x="1066" y="326" width="5" height="2" fill="#000"/>
<rect x="1076" y="344" width="1" height="26" fill="#000"/>
<rect x="1074" y="344" width="5" height="20" fill="#000"/>
<rect x="1075" y="345" width="3" height="18" fill="#ee4328"/>
<rect x="1083" y="311" width="1" height="57" fill="#000"/>
<rect x="1081" y="335" width="5" height="33" fill="#000"/>
<rect x="1082" y="336" width="3" height="31" fill="#00aa4b"/>
<rect x="1090" y="285" width="1" height="40" fill="#000"/>
<rect x="1088" y="309" width="5" height="6" fill="#000"/>
<rect x="1089" y="310" width="3" height="4" fill="#ee4328"/>
</g>
<g shape-rendering="crispEdges">
<rect x="24" y="270" width="1086" height="2" fill="#000"/>
<rect x="24" y="346" width="1086" height="2" fill="#000"/>
<rect x="24" y="421" width="1086" height="2" fill="#000"/>
<rect x="24" y="541" width="1086" height="3" fill="#000"/>
</g>
<path d="M24 309H1110" stroke="#7a7a7a" stroke-width="2" stroke-dasharray="1 1" shape-rendering="crispEdges"/>
<path d="M24 384H1110" stroke="#7a7a7a" stroke-width="2" stroke-dasharray="1 1" shape-rendering="crispEdges"/>
<path d="M24 459.5H1110" stroke="#000" stroke-width="1" stroke-dasharray="3 1" shape-rendering="crispEdges"/>
<path d="M24 497.5H1110" stroke="#000" stroke-width="1" stroke-dasharray="3 1" shape-rendering="crispEdges"/>
<path d="M1044 279 q2.5 -1.6 5 0" stroke="#ee4328" stroke-width="1.2" fill="none"/>
<path d="M70 596 q2.5 1.6 5 0" stroke="#ee4328" stroke-width="1.2" fill="none"/>
<text x="80.7" y="794.9" font-size="10.6" fill="#666" text-anchor="middle">Dec 17</text>
<text x="147.7" y="794.9" font-size="10.6" fill="#666" text-anchor="middle">Dec 31</text>
<text x="214.7" y="794.9" font-size="10.6" fill="#666" text-anchor="middle">Jan 14</text>
<text x="280.7" y="794.9" font-size="10.6" fill="#666" text-anchor="middle">Jan 28</text>
<text x="355.7" y="794.9" font-size="10.6" fill="#666" text-anchor="middle">Feb 11</text>
<text x="422.7" y="794.9" font-size="10.6" fill="#666" text-anchor="middle">Feb 25</text>
<text x="496.7" y="794.9" font-size="10.6" fill="#666" text-anchor="middle">Mar 11</text>
<text x="570.7" y="794.9" font-size="10.6" fill="#666" text-anchor="middle">Mar 25</text>
<text x="645.7" y="794.9" font-size="10.6" fill="#666" text-anchor="middle">Apr 8</text>
<text x="711.7" y="794.9" font-size="10.6" fill="#666" text-anchor="middle">Apr 22</text>
<text x="786.7" y="794.9" font-size="10.6" fill="#666" text-anchor="middle">May 6</text>
<text x="860.7" y="794.9" font-size="10.6" fill="#666" text-anchor="middle">May 20</text>
<text x="927.7" y="794.9" font-size="10.6" fill="#666" text-anchor="middle">Jun 3</text>
<text x="1001.7" y="794.9" font-size="10.6" fill="#666" text-anchor="middle">Jun 17</text>
<text x="1076.7" y="794.9" font-size="10.6" fill="#666" text-anchor="middle">Jul 1</text>
<text x="1159.6" y="577.9" font-size="12" fill="#777" text-anchor="end" textLength="38.5" lengthAdjust="spacingAndGlyphs">1,250.0</text>
<text x="1159.6" y="652.9" font-size="12" fill="#777" text-anchor="end" textLength="38.5" lengthAdjust="spacingAndGlyphs">1,200.0</text>
<text x="1159.6" y="718.9" font-size="12" fill="#777" text-anchor="end" textLength="27" lengthAdjust="spacingAndGlyphs">500K</text>
<path d="M1115.3 314.46432000000004L1120.5 305.96432000000004H1162V322.96432000000004H1120.5Z" fill="#ee4328"/>
<text x="1159.8" y="318.86" font-size="12.2" fill="#fff" stroke="#fff" stroke-width="0.35" text-anchor="end" textLength="38" lengthAdjust="spacingAndGlyphs">1,421.8</text>
<path d="M1115.3 433.8662400000001L1120.5 425.3662400000001H1162V442.3662400000001H1120.5Z" fill="#ee4328"/>
<text x="1159.8" y="438.27" font-size="12.2" fill="#fff" stroke="#fff" stroke-width="0.35" text-anchor="end" textLength="38" lengthAdjust="spacingAndGlyphs">1,342.6</text>
<path d="M1115.3 501.55747999999994L1120.5 493.05747999999994H1162V510.05747999999994H1120.5Z" fill="#1838ff"/>
<text x="1159.8" y="505.96" font-size="12.2" fill="#fff" stroke="#fff" stroke-width="0.35" text-anchor="end" textLength="38" lengthAdjust="spacingAndGlyphs">1,297.7</text>
<path d="M1115.3 271.75L1120.5 263.25H1162V280.25H1120.5Z" fill="#000"/>
<text x="1159.8" y="276.15" font-size="12.2" fill="#fff" stroke="#fff" stroke-width="0.35" text-anchor="end" textLength="38" lengthAdjust="spacingAndGlyphs">1,450.0</text>
<path d="M1115.3 309.75L1120.5 301.25H1162V318.25H1120.5Z" fill="#000"/>
<text x="1159.8" y="314.15" font-size="12.2" fill="#fff" stroke="#fff" stroke-width="0.35" text-anchor="end" textLength="38" lengthAdjust="spacingAndGlyphs">1,425.0</text>
<path d="M1115.3 347.75L1120.5 339.25H1162V356.25H1120.5Z" fill="#000"/>
<text x="1159.8" y="352.15" font-size="12.2" fill="#fff" stroke="#fff" stroke-width="0.35" text-anchor="end" textLength="38" lengthAdjust="spacingAndGlyphs">1,400.0</text>
<path d="M1115.3 384.75L1120.5 376.25H1162V393.25H1120.5Z" fill="#000"/>
<text x="1159.8" y="389.15" font-size="12.2" fill="#fff" stroke="#fff" stroke-width="0.35" text-anchor="end" textLength="38" lengthAdjust="spacingAndGlyphs">1,375.0</text>
<path d="M1115.3 422.75L1120.5 414.25H1162V431.25H1120.5Z" fill="#000"/>
<text x="1159.8" y="427.15" font-size="12.2" fill="#fff" stroke="#fff" stroke-width="0.35" text-anchor="end" textLength="38" lengthAdjust="spacingAndGlyphs">1,350.0</text>
<path d="M1115.3 460.75L1120.5 452.25H1162V469.25H1120.5Z" fill="#000"/>
<text x="1159.8" y="465.15" font-size="12.2" fill="#fff" stroke="#fff" stroke-width="0.35" text-anchor="end" textLength="38" lengthAdjust="spacingAndGlyphs">1,325.0</text>
<path d="M1115.3 497.75L1120.5 489.25H1162V506.25H1120.5Z" fill="#000"/>
<text x="1159.8" y="502.15" font-size="12.2" fill="#fff" stroke="#fff" stroke-width="0.35" text-anchor="end" textLength="38" lengthAdjust="spacingAndGlyphs">1,300.0</text>
<path d="M1115.3 543.25L1120.5 534.75H1162V551.75H1120.5Z" fill="#000"/>
<text x="1159.8" y="547.65" font-size="12.2" fill="#fff" stroke="#fff" stroke-width="0.35" text-anchor="end" textLength="38" lengthAdjust="spacingAndGlyphs">1,270.0</text>
<path d="M1120.8 702.8L1125.6 694.3H1162V711.3H1125.6Z" fill="#ba55d3"/>
<text x="1159.8" y="707.20" font-size="12.2" fill="#fff" stroke="#fff" stroke-width="0.35" text-anchor="end" textLength="27" lengthAdjust="spacingAndGlyphs">591K</text>
<path d="M1120.8 776.45L1125.6 767.95H1162V784.95H1125.6Z" fill="#00aa4b"/>
<text x="1159.8" y="780.85" font-size="12.2" fill="#fff" stroke="#fff" stroke-width="0.35" text-anchor="end" textLength="14.3" lengthAdjust="spacingAndGlyphs">0K</text>
</svg>
<div class="bx " style="left:9px;top:93px;width:1155.0px;height:1.0px;background:#cfcfcf"></div><div class="bx bar" style="left:9px;top:101px;width:1155.0px;height:32.0px;"></div><div class="bx bar" style="left:9px;top:135px;width:1155.0px;height:31.0px;"></div><div class="bx pill" style="left:9.2px;top:53px;width:71.4px;height:17.8px;background:#dcebe2"></div><div class="bx pill" style="left:86.1px;top:53px;width:76.7px;height:17.8px;background:#fbdad8"></div><div class="bx btn" style="left:17px;top:104px;width:90.0px;height:24.0px;border-radius:2px 0 0 2px;border-right:none"></div><div class="bx " style="left:107px;top:104px;width:30.0px;height:24.0px;background:#2b82df"></div><div class="bx " style="left:187px;top:104px;width:1.0px;height:25.0px;background:#d4d4d4"></div><div class="bx btn" style="left:195px;top:104px;width:52.0px;height:24.0px;"></div><div class="bx btn" style="left:254px;top:104px;width:43.0px;height:24.0px;"></div><div class="bx btn" style="left:304px;top:104px;width:60.0px;height:24.0px;"></div><div class="bx btn" style="left:370px;top:104px;width:67.0px;height:24.0px;"></div><div class="bx btn" style="left:443px;top:104px;width:32.0px;height:24.0px;"></div><div class="bx btn" style="left:967px;top:104px;width:74.0px;height:24.0px;"></div><div class="bx btn" style="left:1047px;top:104px;width:41.0px;height:24.0px;"></div><div class="bx btn" style="left:1096px;top:104px;width:27.0px;height:24.0px;"></div><div class="bx btn" style="left:1119px;top:138px;width:42.0px;height:24.0px;"></div><div class="bx " style="left:630px;top:138px;width:1.0px;height:25.0px;background:#d0d0d0"></div><div class="bx " style="left:1132.6px;top:109.4px;width:14.4px;height:2.7px;background:#111;border-radius:1px"></div><div class="bx " style="left:1132.6px;top:114.3px;width:14.4px;height:2.7px;background:#111;border-radius:1px"></div><div class="bx " style="left:1132.6px;top:119.1px;width:14.4px;height:2.7px;background:#111;border-radius:1px"></div>

<svg class="ic" style="left:140px;top:100px" width="40" height="34" viewBox="0 0 40 34">
 <g shape-rendering="crispEdges"><rect x="7" y="8" width="2" height="14" fill="#000"/><rect x="5" y="10" width="6" height="8" fill="#000"/><rect x="6" y="11" width="4" height="6" fill="#c8261e"/>
 <rect x="15" y="10" width="2" height="14" fill="#000"/><rect x="13" y="13" width="6" height="9" fill="#000"/><rect x="14" y="14" width="4" height="7" fill="#0f8741"/></g>
 <path d="M24.3 13.4l4.1 4.3 4.1-4.3" stroke="#000" stroke-width="2.1" fill="none"/>
</svg>
<svg class="ic" style="left:606.4px;top:145.6px" width="14" height="10" viewBox="0 0 14 10"><path d="M1.8 2.6l4.2 4.2 4.2-4.2" stroke="#111" stroke-width="2" fill="none"/></svg>
<svg class="ic" style="left:666.2px;top:145.6px" width="14" height="10" viewBox="0 0 14 10"><path d="M1.8 2.6l4.2 4.2 4.2-4.2" stroke="#111" stroke-width="2" fill="none"/></svg>
<svg class="ic" style="left:739px;top:139px" width="15" height="17" viewBox="0 0 15 17">
 <rect x="0.9" y="3.2" width="12.8" height="12" rx="1.2" fill="#f4f4f4" stroke="#1a1a1a" stroke-width="1.5"/>
 <path d="M0.9 6.4H13.7" stroke="#1a1a1a" stroke-width="1.2" fill="none"/>
 <path d="M4.1 6.4V15M7.3 6.4V15M10.5 6.4V15M1 9.4H13.6M1 12.3H13.6" stroke="#444" stroke-width="0.8" fill="none"/>
 <rect x="3" y="1.1" width="2.2" height="3.6" rx="1" fill="#fff" stroke="#1a1a1a" stroke-width="1.1"/>
 <rect x="9.4" y="1.1" width="2.2" height="3.6" rx="1" fill="#fff" stroke="#1a1a1a" stroke-width="1.1"/>
</svg>
<svg class="ic" style="left:888px;top:72px" width="18" height="18" viewBox="0 0 18 18"><circle cx="9" cy="8.2" r="8.1" fill="#0e2c5e"/><path d="M9 3.4V13M4.2 8.2H13.8" stroke="#fff" stroke-width="3.4"/></svg>
<svg class="ic" style="left:980px;top:72px" width="18" height="18" viewBox="0 0 18 18"><circle cx="8.35" cy="8.5" r="8.3" fill="#f9a52b"/><path d="M8.35 3.9V9.8" stroke="#fff" stroke-width="2.7" stroke-linecap="round"/><circle cx="8.35" cy="12.9" r="1.35" fill="#fff"/></svg>
<svg class="ic" style="left:1047px;top:72.3px" width="17" height="16" viewBox="0 0 19 18"><path d="M9.5 0.2l2.75 5.95 6.45.75-4.8 4.4 1.3 6.4-5.7-3.2-5.7 3.2 1.3-6.4L.3 6.9l6.45-.75z" fill="#2f7de1"/></svg>
<svg class="ic" style="left:1112.5px;top:73px" width="17" height="17" viewBox="0 0 17 17"><circle cx="8.5" cy="8.5" r="7.5" fill="#fff" stroke="#333" stroke-width="1.4"/><text x="8.5" y="12.7" font-size="11.5" font-weight="700" fill="#333" text-anchor="middle" font-family="Liberation Sans, Arial, sans-serif">?</text></svg>
<svg class="ic" style="left:1102px;top:107.3px" width="16" height="16" viewBox="0 0 16 16"><path d="M2.7 12.5L11.6 4.2" stroke="#555" stroke-width="1.5" fill="none"/><path d="M7.6 3.6H12.3V8.3Z" fill="#555"/></svg>

<span id="ttl" class="t" style="left:9.0px;top:8.0px;font-size:20.5px;font-weight:700;color:#111;letter-spacing:-0.03px;transform:scaleX(0.9300);">Gold Aug '19 (GCQ19)</span>
<span id="px" class="t" style="left:8.8px;top:34.0px;font-size:16px;font-weight:700;color:#111;letter-spacing:-0.15px;">1,421.8</span>
<span id="chg" class="t" style="left:64.1px;top:34.0px;font-size:16px;font-weight:700;color:#0b8a3e;letter-spacing:-0.15px;">+13.8 (+0.98%)</span>
<span id="tm" class="t" style="left:176.6px;top:36.0px;font-size:13.5px;font-weight:400;color:#666;letter-spacing:-0.46px;">09:52 CT [COMEX]</span>
<span id="bid" class="t" style="left:11.9px;top:57.0px;font-size:12.5px;font-weight:400;color:#0b8a3e;letter-spacing:0.13px;">1,421.7 x 2</span>
<span id="ask" class="t" style="left:89.0px;top:57.0px;font-size:12.5px;font-weight:400;color:#d9291c;letter-spacing:0.26px;">1,421.8 x 19</span>
<span id="ic" class="t" style="left:9.0px;top:76.0px;font-size:12.5px;font-weight:700;color:#222;letter-spacing:-0.06px;">INTERACTIVE CHART</span>
<span id="icd" class="t" style="left:143.6px;top:75.0px;font-size:13px;font-weight:400;color:#666;letter-spacing:0.05px;">for Wed, Jul 3rd, 2019</span>
<span id="mych" class="t" style="left:909.7px;top:76.0px;font-size:12.4px;font-weight:400;color:#2f7de1;letter-spacing:0.44px;">My Charts</span>
<span id="alr" class="t" style="left:1003.6px;top:76.0px;font-size:12.4px;font-weight:400;color:#2f7de1;letter-spacing:0.39px;">Alerts</span>
<span id="wat" class="t" style="left:1067.2px;top:76.0px;font-size:12.4px;font-weight:400;color:#2f7de1;transform:scaleX(1.0324);">Watch</span>
<span id="hlp" class="t" style="left:1133.5px;top:76.0px;font-size:12.4px;font-weight:400;color:#2f7de1;transform:scaleX(1.0917);">Help</span>
<span id="sym" class="t" style="left:23.0px;top:110.0px;font-size:13px;font-weight:400;color:#333;transform:scaleX(1.0300);">GCQ19</span>
<span id="go" class="t" style="left:112.4px;top:111.0px;font-size:12.3px;font-weight:700;color:#fff;transform:scaleX(0.9947);">GO</span>
<span id="b1" class="t" style="left:201.5px;top:111.0px;font-size:12.7px;font-weight:400;color:#2f7de1;letter-spacing:-0.06px;">+Study</span>
<span id="b2" class="t" style="left:260.6px;top:111.0px;font-size:12.7px;font-weight:400;color:#2f7de1;transform:scaleX(1.0421);">Tools</span>
<span id="b3" class="t" style="left:309.0px;top:111.0px;font-size:12.7px;font-weight:400;color:#2f7de1;letter-spacing:0.01px;transform:scaleX(1.0700);">Settings</span>
<span id="b4" class="t" style="left:376.1px;top:111.0px;font-size:12.7px;font-weight:400;color:#2f7de1;letter-spacing:0.35px;">Compare</span>
<span id="b5" class="t" style="left:449.5px;top:111.0px;font-size:12.7px;font-weight:400;color:#2f7de1;transform:scaleX(1.0722);">f(x)</span>
<span id="b6" class="t" style="left:974.3px;top:111.0px;font-size:12.7px;font-weight:400;color:#2f7de1;letter-spacing:0.31px;">Templates</span>
<span id="b7" class="t" style="left:1052.9px;top:111.0px;font-size:12.7px;font-weight:400;color:#2f7de1;transform:scaleX(1.1080);">Print</span>
<span id="b8" class="t" style="left:1124.5px;top:145.0px;font-size:12.7px;font-weight:400;color:#2f7de1;transform:scaleX(1.0159);">Clear</span>
<span id="r0" class="t" style="left:19.1px;top:143.0px;font-size:13px;font-weight:400;color:#222;transform:scaleX(0.9089);text-decoration:underline;text-underline-offset:0.8px;">RANGE</span>
<span id="r1" class="t" style="left:69.8px;top:143.0px;font-size:13px;font-weight:400;color:#333;transform:scaleX(0.9390);">1D</span>
<span id="r2" class="t" style="left:95.6px;top:143.0px;font-size:13px;font-weight:400;color:#333;transform:scaleX(1.0129);">5D</span>
<span id="r3" class="t" style="left:121.5px;top:143.0px;font-size:13px;font-weight:400;color:#333;transform:scaleX(1.0916);">1M</span>
<span id="r4" class="t" style="left:149.6px;top:143.0px;font-size:13px;font-weight:400;color:#333;transform:scaleX(1.1066);">3M</span>
<span id="r5" class="t" style="left:177.9px;top:143.0px;font-size:13px;font-weight:400;color:#333;transform:scaleX(1.1031);">6M</span>
<span id="r6" class="t" style="left:206.2px;top:143.0px;font-size:13px;font-weight:400;color:#333;transform:scaleX(1.0717);">9M</span>
<span id="r7" class="t" style="left:234.4px;top:143.0px;font-size:13px;font-weight:700;color:#2f7de1;transform:scaleX(0.9349);">1Y</span>
<span id="r8" class="t" style="left:260.3px;top:143.0px;font-size:13px;font-weight:400;color:#333;transform:scaleX(0.9373);">2Y</span>
<span id="r9" class="t" style="left:285.1px;top:143.0px;font-size:13px;font-weight:400;color:#333;transform:scaleX(0.9146);">3Y</span>
<span id="r10" class="t" style="left:310.0px;top:143.0px;font-size:13px;font-weight:400;color:#333;transform:scaleX(0.9245);">5Y</span>
<span id="r11" class="t" style="left:334.7px;top:143.0px;font-size:13px;font-weight:400;color:#333;transform:scaleX(0.9130);">10Y</span>
<span id="r12" class="t" style="left:365.4px;top:143.0px;font-size:13px;font-weight:400;color:#333;transform:scaleX(0.9182);">20Y</span>
<span id="r13" class="t" style="left:396.3px;top:143.0px;font-size:13px;font-weight:400;color:#333;transform:scaleX(0.9630);">MAX</span>
<span id="fq" class="t" style="left:439.1px;top:143.0px;font-size:13px;font-weight:400;color:#222;letter-spacing:-0.34px;transform:scaleX(0.9300);text-decoration:underline;text-underline-offset:0.8px;">FREQUENCY</span>
<span id="dn" class="t" style="left:520.0px;top:143.0px;font-size:13px;font-weight:400;color:#333;letter-spacing:0.12px;">Daily Nearby</span>
<span id="p1y" class="t" style="left:640.5px;top:143.0px;font-size:13px;font-weight:400;color:#333;transform:scaleX(0.9157);">1Y</span>
<span id="dt" class="t" style="left:696.5px;top:143.0px;font-size:13px;font-weight:400;color:#222;transform:scaleX(0.9468);text-decoration:underline;text-underline-offset:0.8px;">DATE</span>
<span id="s0" class="t" style="left:19.3px;top:171.0px;font-size:14px;font-weight:700;color:#111;">GCQ19</span>
<span id="s1" class="t" style="left:70.7px;top:172.0px;font-size:13px;font-weight:400;color:#333;letter-spacing:0.33px;">07/03/2019</span>
<span id="s2" class="t" style="left:143.1px;top:172.0px;font-size:13px;font-weight:700;color:#222;transform:scaleX(1.0093);">O:</span>
<span id="s3" class="t" style="left:160.4px;top:172.0px;font-size:13px;font-weight:400;color:#333;letter-spacing:-0.19px;">1,424.7</span>
<span id="s4" class="t" style="left:206.0px;top:172.0px;font-size:13px;font-weight:700;color:#222;transform:scaleX(1.0639);">H:</span>
<span id="s5" class="t" style="left:223.9px;top:172.0px;font-size:13px;font-weight:400;color:#333;letter-spacing:-0.05px;">1,441.0</span>
<span id="s6" class="t" style="left:269.9px;top:172.0px;font-size:13px;font-weight:700;color:#222;transform:scaleX(0.8918);">L:</span>
<span id="s7" class="t" style="left:284.5px;top:172.0px;font-size:13px;font-weight:400;color:#333;letter-spacing:-0.15px;">1,414.7</span>
<span id="s8" class="t" style="left:331.3px;top:172.0px;font-size:13px;font-weight:700;color:#222;transform:scaleX(0.8846);">C:</span>
<span id="s9" class="t" style="left:346.5px;top:172.0px;font-size:13px;font-weight:400;color:#333;letter-spacing:-0.15px;">1,421.8</span>
<span id="s10" class="t" style="left:393.0px;top:172.0px;font-size:13px;font-weight:700;color:#222;transform:scaleX(0.9979);">Δ:</span>
<span id="s11" class="t" style="left:408.8px;top:172.0px;font-size:13px;font-weight:400;color:#333;transform:scaleX(0.9619);">13.8</span>
</div>
</body></html>
